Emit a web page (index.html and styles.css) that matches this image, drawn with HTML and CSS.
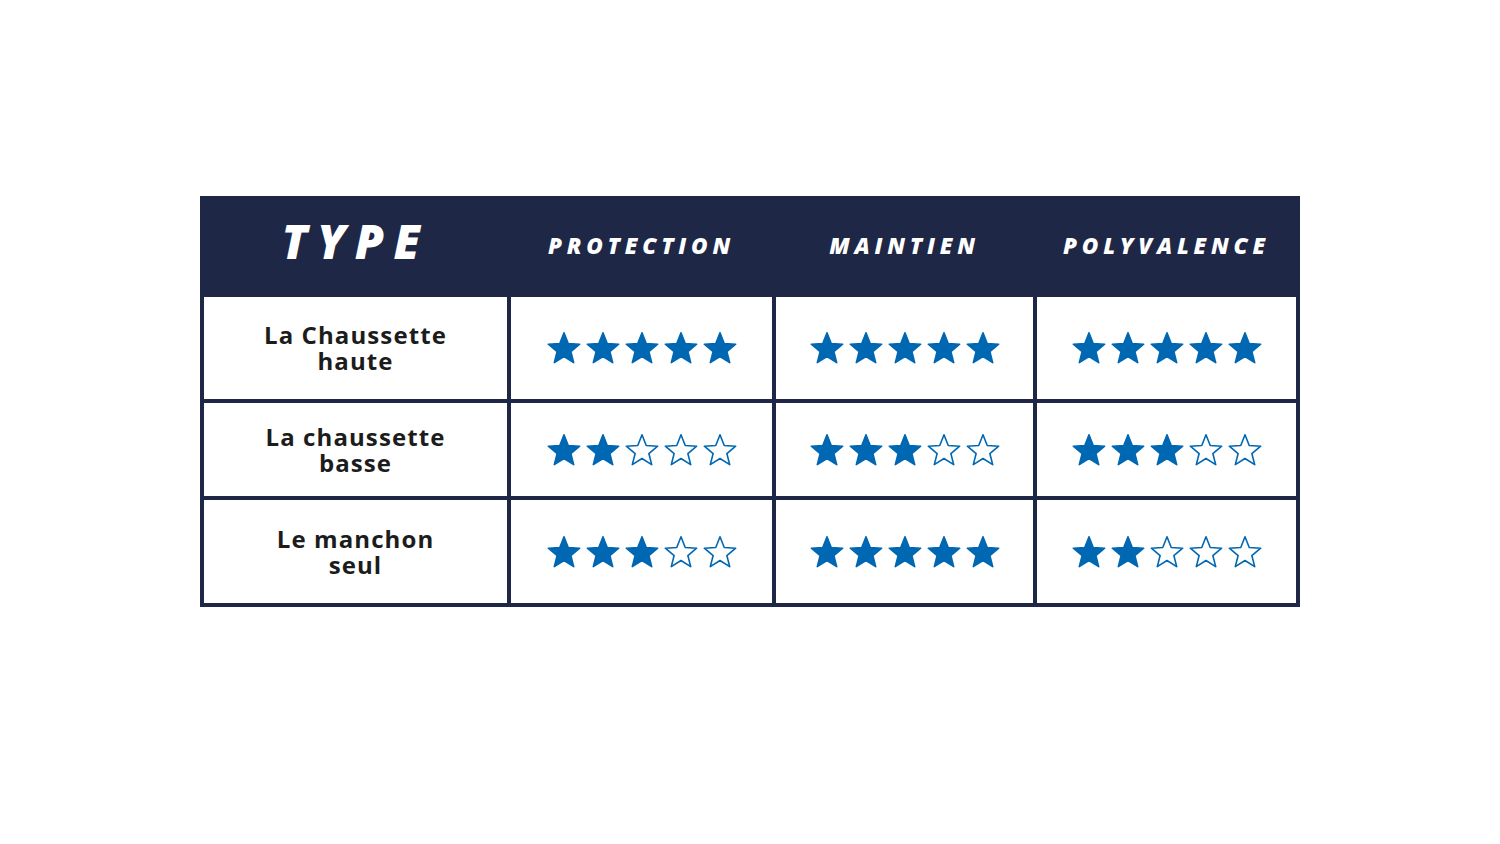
FILE: index.html
```html
<!DOCTYPE html>
<html lang="fr">
<head>
<meta charset="utf-8">
<title>Comparatif</title>
<link rel="stylesheet" href="styles.css">
</head>
<body>
<svg class="defs" width="0" height="0" aria-hidden="true">
  <defs>
    <symbol id="star" viewBox="0 0 34 32">
      <polygon points="17,0.8 21.23,11.48 32.69,12.2 23.85,19.52 26.7,30.65 17,24.5 7.3,30.65 10.15,19.52 1.31,12.2 12.77,11.48"/>
    </symbol>
  </defs>
</svg>
<main class="page">
  <div class="table">
    <div class="hcell type">TYPE</div>
    <div class="hcell">PROTECTION</div>
    <div class="hcell">MAINTIEN</div>
    <div class="hcell">POLYVALENCE</div>

    <div class="cell label"><span class="line">La Chaussette</span><span class="line">haute</span></div>
    <div class="cell"><div class="stars"><svg class="on"><use href="#star"/></svg><svg class="on"><use href="#star"/></svg><svg class="on"><use href="#star"/></svg><svg class="on"><use href="#star"/></svg><svg class="on"><use href="#star"/></svg></div></div>
    <div class="cell"><div class="stars"><svg class="on"><use href="#star"/></svg><svg class="on"><use href="#star"/></svg><svg class="on"><use href="#star"/></svg><svg class="on"><use href="#star"/></svg><svg class="on"><use href="#star"/></svg></div></div>
    <div class="cell"><div class="stars"><svg class="on"><use href="#star"/></svg><svg class="on"><use href="#star"/></svg><svg class="on"><use href="#star"/></svg><svg class="on"><use href="#star"/></svg><svg class="on"><use href="#star"/></svg></div></div>

    <div class="cell label"><span class="line">La chaussette</span><span class="line">basse</span></div>
    <div class="cell"><div class="stars"><svg class="on"><use href="#star"/></svg><svg class="on"><use href="#star"/></svg><svg class="off"><use href="#star"/></svg><svg class="off"><use href="#star"/></svg><svg class="off"><use href="#star"/></svg></div></div>
    <div class="cell"><div class="stars"><svg class="on"><use href="#star"/></svg><svg class="on"><use href="#star"/></svg><svg class="on"><use href="#star"/></svg><svg class="off"><use href="#star"/></svg><svg class="off"><use href="#star"/></svg></div></div>
    <div class="cell"><div class="stars"><svg class="on"><use href="#star"/></svg><svg class="on"><use href="#star"/></svg><svg class="on"><use href="#star"/></svg><svg class="off"><use href="#star"/></svg><svg class="off"><use href="#star"/></svg></div></div>

    <div class="cell label"><span class="line">Le manchon</span><span class="line">seul</span></div>
    <div class="cell"><div class="stars"><svg class="on"><use href="#star"/></svg><svg class="on"><use href="#star"/></svg><svg class="on"><use href="#star"/></svg><svg class="off"><use href="#star"/></svg><svg class="off"><use href="#star"/></svg></div></div>
    <div class="cell"><div class="stars"><svg class="on"><use href="#star"/></svg><svg class="on"><use href="#star"/></svg><svg class="on"><use href="#star"/></svg><svg class="on"><use href="#star"/></svg><svg class="on"><use href="#star"/></svg></div></div>
    <div class="cell"><div class="stars"><svg class="on"><use href="#star"/></svg><svg class="on"><use href="#star"/></svg><svg class="off"><use href="#star"/></svg><svg class="off"><use href="#star"/></svg><svg class="off"><use href="#star"/></svg></div></div>
  </div>
</main>
</body>
</html>
```

FILE: styles.css
```css
html, body {
  margin: 0;
  padding: 0;
  background: #ffffff;
}

.defs {
  position: absolute;
  width: 0;
  height: 0;
  overflow: hidden;
}

.page {
  width: 1500px;
  height: 844px;
  padding-top: 196px;
  padding-left: 200px;
  box-sizing: border-box;
}

.table {
  display: grid;
  grid-template-columns: 303px 261px 257px 259px;
  grid-template-rows: 97px 102px 93px 103px;
  gap: 4px;
  padding: 0 4px 4px 4px;
  width: 1100px;
  box-sizing: border-box;
  background: #1f2747;
}

.hcell {
  display: flex;
  align-items: center;
  justify-content: center;
  background: #1f2747;
  color: #ffffff;
  font-family: "Open Sans", "Liberation Sans", sans-serif;
  font-style: italic;
  font-weight: 800;
  font-size: 22.5px;
  letter-spacing: 4.8px;
  padding-top: 1px;
}

.hcell.type {
  font-size: 47px;
  letter-spacing: 9.5px;
  padding-top: 0;
  padding-bottom: 7px;
}

.cell {
  display: flex;
  align-items: center;
  justify-content: center;
  background: #ffffff;
}

.label {
  flex-direction: column;
  font-family: "Open Sans", "Liberation Sans", sans-serif;
  font-weight: 700;
  font-size: 24px;
  letter-spacing: 1.1px;
  color: #1c1c1c;
  text-align: center;
}

.line {
  display: block;
  height: 26px;
  line-height: 26px;
}

.stars {
  display: flex;
  gap: 5px;
}

.stars svg {
  width: 34px;
  height: 32px;
  stroke-width: 1.6;
  stroke-linejoin: round;
}

.stars svg.on {
  fill: #0067b2;
  stroke: #0067b2;
}

.stars svg.off {
  fill: #ffffff;
  stroke: #0067b2;
}
```
